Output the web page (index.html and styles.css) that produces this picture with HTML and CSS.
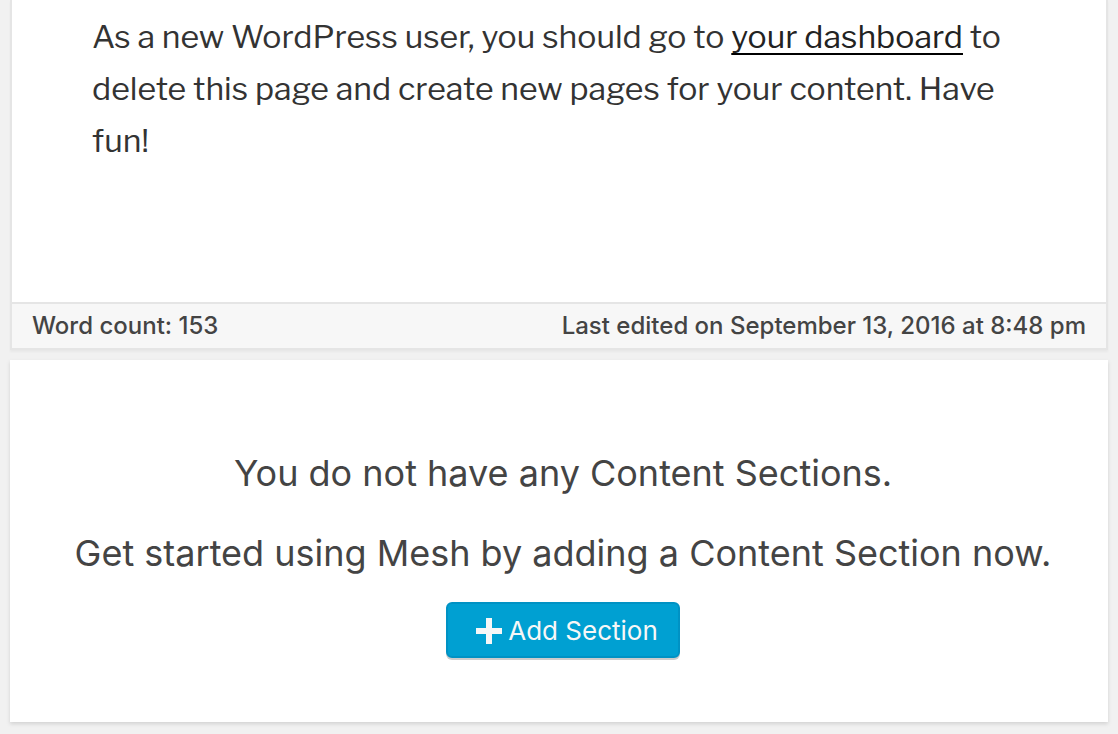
FILE: index.html
```html
<!DOCTYPE html>
<html lang="en">
<head>
<meta charset="utf-8">
<title>Edit Page</title>
<link rel="stylesheet" href="styles.css">
</head>
<body>
<main class="page">
  <section class="editor">
    <div class="editor-content">
      <p>As a new WordPress user, you should go to <a href="#">your dashboard</a> to delete this page and create new pages for your content. Have fun!</p>
    </div>
    <footer class="status">
      <span>Word count: 153</span>
      <span>Last edited on September 13, 2016 at 8:48 pm</span>
    </footer>
  </section>
  <section class="sections">
    <p>You do not have any Content Sections.</p>
    <p>Get started using Mesh by adding a Content Section now.</p>
    <button class="add" type="button">
      <svg class="plus" viewBox="0 0 26 26" aria-hidden="true"><path d="M10 0h6v10h10v6H16v10h-6V16H0v-6h10z"/></svg>
      Add Section
    </button>
  </section>
</main>
</body>
</html>
```
FILE: styles.css
```css
* { box-sizing: border-box; }
body {
  margin: 0;
  background: #f1f1f1;
  color: #444;
  font-family: Inter, "Noto Sans", sans-serif;
}
.page { padding: 0 10px 12px; }
.editor {
  margin: 0 0 10px;
  border: 2px solid #e5e5e5;
  border-top: 0;
  background: #fff;
  box-shadow: 0 2px 2px rgba(0, 0, 0, .04);
}
.editor-content {
  padding: 11px 80px 135px;
  color: #333;
  font-family: "Libre Franklin", Inter, sans-serif;
  font-size: 32px;
  line-height: 52px;
}
.editor-content p { margin: 0; }
.editor-content a {
  color: #222;
  text-decoration: underline #000 2px;
  text-decoration-skip-ink: none;
  text-underline-offset: 5px;
}
.status {
  display: flex;
  flex-wrap: wrap;
  justify-content: space-between;
  padding: 4px 20px;
  border-top: 2px solid #e5e5e5;
  background: #f7f7f7;
  font-size: 24px;
  font-weight: 500;
  line-height: 36px;
}
.sections {
  display: flex;
  flex-direction: column;
  align-items: center;
  padding: 85px 20px 64px 28px;
  background: #fff;
  box-shadow: 0 2px 4px rgba(0, 0, 0, .13);
}
.sections p {
  margin: 0 0 24px;
  font-size: 36px;
  line-height: 56px;
  text-align: center;
}
.sections p + p { margin-bottom: 21px; }
.add {
  display: flex;
  align-items: center;
  gap: 6px;
  height: 56px;
  padding: 2px 20px 0 28px;
  border: 2px solid #0092c4;
  border-radius: 6px;
  background: #00a0d2;
  box-shadow: 0 2px 0 #ccc;
  color: #f7f7f7;
  font: 26px/50px Inter, "Noto Sans", sans-serif;
}
.plus { width: 26px; height: 26px; fill: #f7f7f7; }
```
